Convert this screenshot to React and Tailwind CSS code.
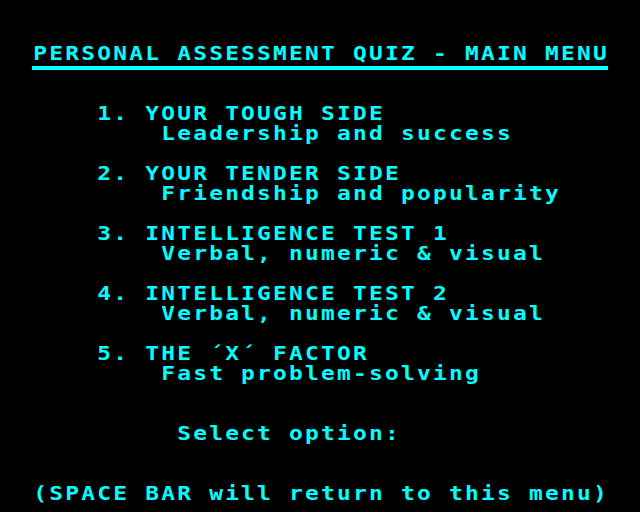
import React from "react";

const rows = [
  "",
  "",
  "  PERSONAL ASSESSMENT QUIZ - MAIN MENU",
  null,
  "",
  "      1. YOUR TOUGH SIDE",
  "          Leadership and success",
  "",
  "      2. YOUR TENDER SIDE",
  "          Friendship and popularity",
  "",
  "      3. INTELLIGENCE TEST 1",
  "          Verbal, numeric & visual",
  "",
  "      4. INTELLIGENCE TEST 2",
  "          Verbal, numeric & visual",
  "",
  "      5. THE \u00b4X\u00b4 FACTOR",
  "          Fast problem-solving",
  "",
  "",
  "           Select option:",
  "",
  "",
  "  (SPACE BAR will return to this menu)",
];

export default function App() {
  return (
    <div
      className="w-[640px] h-[512px] bg-black overflow-hidden pt-[3px] text-[#00ffff]"
      style={{ fontFamily: '"DejaVu Sans Mono", monospace' }}
    >
      {rows.map((r, i) =>
        r === null ? (
          <div key={i} className="h-[20px] pt-[3px]">
            <div className="ml-[32px] w-[576px] h-[4px] bg-[#00ffff]" />
          </div>
        ) : (
          <div
            key={i}
            className="h-[20px] leading-[20px] text-[19px] font-bold whitespace-pre tracking-[1.89px] pl-[1px] origin-left scale-x-[1.2]"
          >
            {r}
          </div>
        )
      )}
    </div>
  );
}
